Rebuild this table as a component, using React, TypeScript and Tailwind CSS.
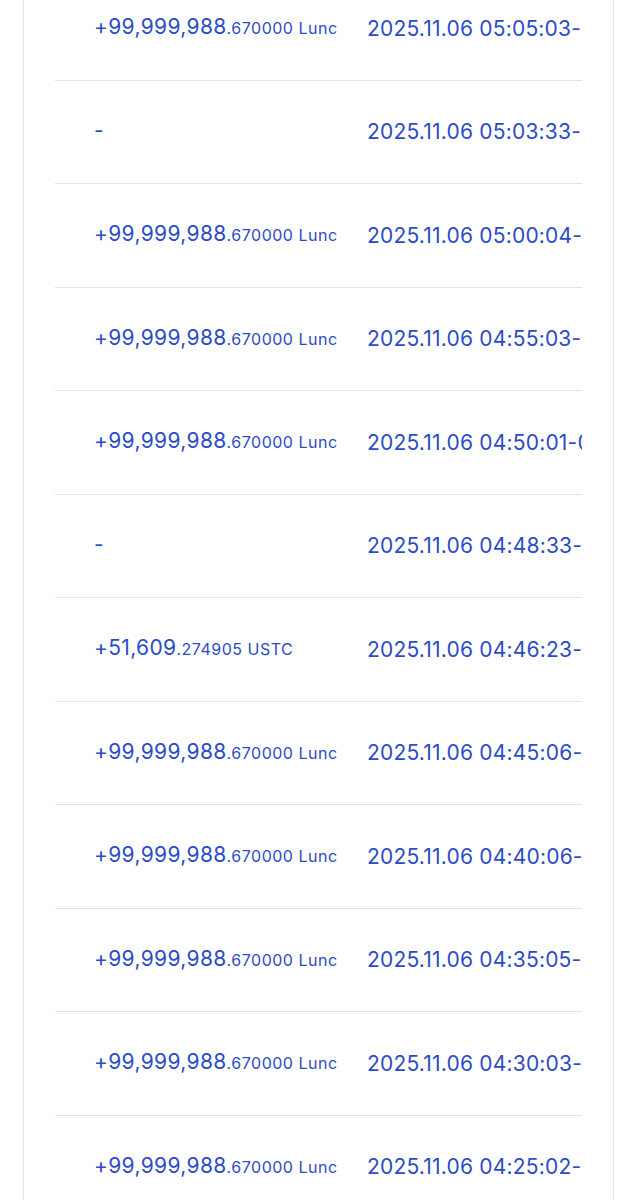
import React from "react";

type Row = { amt: string | null; dec?: string; unit?: string; time: string };

const rows: Row[] = [
  { amt: "+99,999,988", dec: ".670000", unit: "Lunc", time: "2025.11.06 05:05:03-05:00" },
  { amt: null, time: "2025.11.06 05:03:33-05:00" },
  { amt: "+99,999,988", dec: ".670000", unit: "Lunc", time: "2025.11.06 05:00:04-05:00" },
  { amt: "+99,999,988", dec: ".670000", unit: "Lunc", time: "2025.11.06 04:55:03-05:00" },
  { amt: "+99,999,988", dec: ".670000", unit: "Lunc", time: "2025.11.06 04:50:01-05:00" },
  { amt: null, time: "2025.11.06 04:48:33-05:00" },
  { amt: "+51,609", dec: ".274905", unit: "USTC", time: "2025.11.06 04:46:23-05:00" },
  { amt: "+99,999,988", dec: ".670000", unit: "Lunc", time: "2025.11.06 04:45:06-05:00" },
  { amt: "+99,999,988", dec: ".670000", unit: "Lunc", time: "2025.11.06 04:40:06-05:00" },
  { amt: "+99,999,988", dec: ".670000", unit: "Lunc", time: "2025.11.06 04:35:05-05:00" },
  { amt: "+99,999,988", dec: ".670000", unit: "Lunc", time: "2025.11.06 04:30:03-05:00" },
  { amt: "+99,999,988", dec: ".670000", unit: "Lunc", time: "2025.11.06 04:25:02-05:00" },
];

export default function App() {
  return (
    <div
      className="w-[637px] h-[1200px] overflow-hidden bg-white"
      style={{ fontFamily: "Inter, 'Open Sans', sans-serif" }}
    >
      <div className="mx-[23px] h-full flex flex-col border-x border-[#e3e6f5] bg-white overflow-hidden">
        <div className="mx-[31px] overflow-hidden mt-[-23px] shrink-0">
          {rows.map((r, i) => (
            <div
              key={i}
              className="flex items-center h-[103.5px] border-b border-[#dfe3f5] text-[#2c4cc6] whitespace-nowrap"
            >
              <div className="w-[312px] shrink-0 pl-[39px]">
                {r.amt ? (
                  <span className="text-[21px] leading-none tracking-[0.35px]">
                    {r.amt}
                    <span className="text-[16px] tracking-[0.5px]">
                      {r.dec} {r.unit}
                    </span>
                  </span>
                ) : (
                  <span className="text-[21px] leading-none">-</span>
                )}
              </div>
              <div className="shrink-0 text-[21px] leading-none tracking-[0.2px]">{r.time}</div>
            </div>
          ))}
        </div>
      </div>
    </div>
  );
}
